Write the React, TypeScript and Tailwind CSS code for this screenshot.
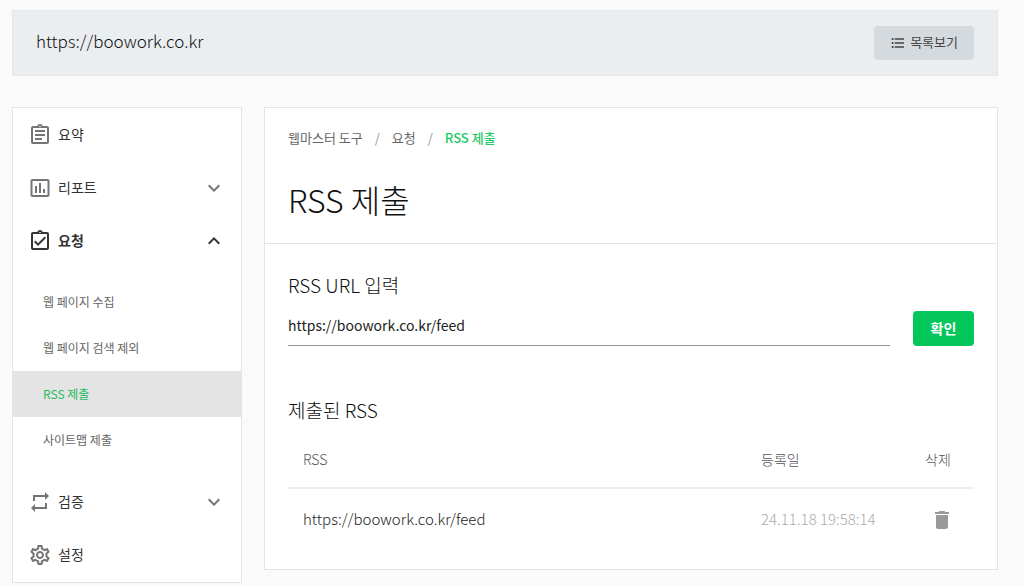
import { useState } from 'react'
import {
  MdDelete,
  MdExpandLess,
  MdExpandMore,
  MdFormatListBulleted,
  MdInsertChartOutlined,
  MdOutlineAssignment,
  MdOutlineAssignmentTurnedIn,
  MdOutlineSettings,
  MdRepeat,
} from 'react-icons/md'
import type { IconType } from 'react-icons'

const SITE = 'https://boowork.co.kr'

interface MenuItem {
  label: string
  icon: IconType
  expandable?: boolean
  children?: string[]
}

const menu: MenuItem[] = [
  { label: '요약', icon: MdOutlineAssignment },
  { label: '리포트', icon: MdInsertChartOutlined, expandable: true },
  {
    label: '요청',
    icon: MdOutlineAssignmentTurnedIn,
    expandable: true,
    children: ['웹 페이지 수집', '웹 페이지 검색 제외', 'RSS 제출', '사이트맵 제출'],
  },
  { label: '검증', icon: MdRepeat, expandable: true },
  { label: '설정', icon: MdOutlineSettings },
]

const feeds = [{ url: `${SITE}/feed`, date: '24.11.18 19:58:14' }]

function Header() {
  return (
    <header className="flex items-center justify-between border border-[#e4e6e8] bg-[#eaeef1] px-[23px] py-[15px]">
      <span className="pb-1 text-[17px] leading-6 font-light text-[#111]">{SITE}</span>
      <button className="flex h-[34px] items-center gap-1 rounded bg-[#d5dade] px-4 text-[13px] text-[#444]">
        <MdFormatListBulleted className="size-4" />
        <span className="pb-0.5">목록보기</span>
      </button>
    </header>
  )
}

function Sidebar() {
  return (
    <nav className="w-[230px] shrink-0 border border-[#e4e4e4] bg-white pb-px">
      <ul>
        {menu.map(({ label, icon: Icon, expandable, children }) => {
          const Chevron = children ? MdExpandLess : MdExpandMore
          return (
            <li key={label}>
              <button
                className={`flex h-[53px] w-full items-center px-[15px] text-sm text-[#333] ${
                  children ? 'font-bold' : ''
                }`}
              >
                <Icon className={`mr-1.5 size-6 ${children ? 'text-[#333]' : 'text-[#757575]'}`} />
                <span className="pb-0.5">{label}</span>
                {expandable && (
                  <Chevron
                    className={`ml-auto size-6 ${children ? 'text-[#333]' : 'text-[#757575]'}`}
                  />
                )}
              </button>
              {children && (
                <ul className="py-3">
                  {children.map((child) => (
                    <li key={child}>
                      <a
                        href="#"
                        className={`flex h-[46px] items-center pl-[30px] text-xs ${
                          child === 'RSS 제출' ? 'bg-[#e4e4e4] text-[#1fba60]' : 'text-[#666]'
                        }`}
                      >
                        {child}
                      </a>
                    </li>
                  ))}
                </ul>
              )}
            </li>
          )
        })}
      </ul>
    </nav>
  )
}

function FeedTable() {
  return (
    <table className="w-full text-left">
      <thead>
        <tr className="h-[58px] border-b-2 border-[#eee] text-sm text-[#555]">
          <th className="px-[15px] font-light">RSS</th>
          <th className="w-[164px] px-[15px] font-light">등록일</th>
          <th className="w-16 pl-[15px] font-light">삭제</th>
        </tr>
      </thead>
      <tbody>
        {feeds.map((feed) => (
          <tr key={feed.url} className="h-[62px] text-[15px] font-light">
            <td className="px-[15px] text-[#222]">{feed.url}</td>
            <td className="px-[15px] whitespace-nowrap text-[#aaa]">{feed.date}</td>
            <td className="pl-5">
              <button className="flex text-[#999]" aria-label="삭제">
                <MdDelete className="size-6" />
              </button>
            </td>
          </tr>
        ))}
      </tbody>
    </table>
  )
}

export default function App() {
  const [url, setUrl] = useState(`${SITE}/feed`)

  return (
    <div className="min-h-screen bg-[#fafafa] pt-[10px] pr-[26px] pl-3 font-['Noto_Sans_CJK_KR',sans-serif]">
      <Header />
      <div className="mt-[31px] flex items-start gap-[22px]">
        <Sidebar />
        <main className="min-w-0 flex-1 border border-[#e4e4e4] bg-white">
          <div className="border-b border-[#e4e4e4] px-[23px] pt-5 pb-[21px]">
            <div className="flex gap-3 text-[13px] leading-5 text-[#666]">
              <a href="#">웹마스터 도구</a>
              <span className="text-[#999]">/</span>
              <a href="#">요청</a>
              <span className="text-[#999]">/</span>
              <span className="font-medium text-[#1fcb66]">RSS 제출</span>
            </div>
            <h1 className="mt-7 text-[32px] leading-[46px] font-light text-[#111]">RSS 제출</h1>
          </div>

          <div className="px-[23px] pt-[29px] pb-[19px]">
            <form className="flex items-end gap-[23px]" onSubmit={(e) => e.preventDefault()}>
              <div className="min-w-0 flex-1">
                <label htmlFor="rss-url" className="block text-[19px] leading-6 font-light text-[#111]">
                  RSS URL 입력
                </label>
                <input
                  id="rss-url"
                  value={url}
                  onChange={(e) => setUrl(e.target.value)}
                  className="mt-2.5 block h-[39px] w-full border-b border-[#949494] pb-0.5 text-sm text-[#222] outline-none"
                />
              </div>
              <button className="h-[35px] w-[61px] rounded bg-[#03c75a] pb-0.5 text-sm font-bold text-white">
                확인
              </button>
            </form>

            <h2 className="mt-[52px] mb-2 text-[19px] leading-6 font-light text-[#111]">제출된 RSS</h2>
            <FeedTable />
          </div>
        </main>
      </div>
    </div>
  )
}
